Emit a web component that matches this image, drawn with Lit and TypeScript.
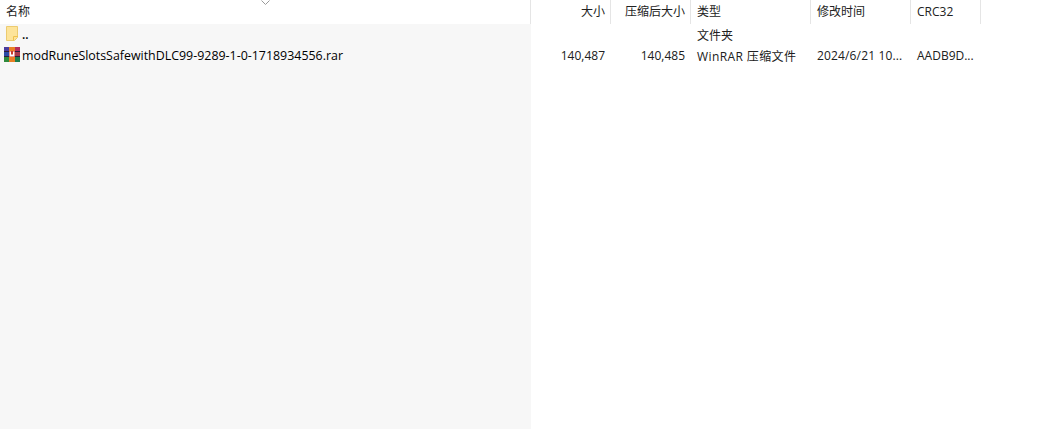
import { LitElement, html, css } from "lit";
import { customElement } from "lit/decorators.js";

const COLS = [
  { label: "名称", cls: "name" },
  { label: "大小", cls: "num" },
  { label: "压缩后大小", cls: "num" },
  { label: "类型", cls: "" },
  { label: "修改时间", cls: "" },
  { label: "CRC32", cls: "" },
];

@customElement("app-root")
export class AppRoot extends LitElement {
  static styles = css`
    :host {
      display: block;
      width: 1064px;
      height: 429px;
      overflow: hidden;
      background: #fff;
      font-family: "Open Sans", "Noto Sans CJK SC", sans-serif;
      font-size: 12px;
      color: #1a1a1a;
      position: relative;
    }
    .grid {
      display: grid;
      grid-template-columns: 531px 80px 80px 120px 100px 70px;
      grid-template-rows: 24px 21px 21px 1fr;
      height: 429px;
      width: 981px;
    }
    .head {
      display: flex;
      align-items: center;
      padding: 0 5px 1px 6px;
      border-right: 1px solid #e5e5e5;
      color: #222;
      line-height: 1;
      white-space: nowrap;
      box-sizing: border-box;
      font-size: 12px;
    }
    .head.num { justify-content: flex-end; }
    .cell {
      display: flex;
      align-items: center;
      padding: 0 5px 0 6px;
      white-space: nowrap;
      overflow: hidden;
      box-sizing: border-box;
      color: #202020;
    }
    .cell.num { justify-content: flex-end; padding-right: 6px; }
    .cell.name {
      background: #f7f7f7;
      padding: 0 0 0 4px;
      gap: 2px;
    }
    .head.name { background: #fff; padding-left: 6px; }
    .filename { font-size: 12.42px; color: #000; }
    .dots { color: #000; font-weight: 600; }
    .brand { letter-spacing: 0.4px; }
    .date { letter-spacing: 0.15px; }
    .folder { margin-top: -2px; }
    .archive { margin-top: -1px; }
    .fill { grid-column: 1; background: #f7f7f7; }
    .sort {
      position: absolute;
      left: 261px;
      top: 0;
      width: 9px;
      height: 5px;
    }
    svg { display: block; flex: none; }
  `;

  render() {
    return html`
      <div class="grid">
        ${COLS.map((c) => html`<div class="head ${c.cls}">${c.label}</div>`)}

        <div class="cell name">
          <svg class="folder" width="16" height="17" viewBox="0 0 16 17">
            <path d="M2.500 1.500h11v11l-3 3h-8z" fill="#fde49a" stroke="#eccb70" />
            <path d="M9.500 15.500v-4h4.500" fill="none" stroke="#efc24e" />
          </svg>
          <span class="dots">..</span>
        </div>
        <div class="cell"></div>
        <div class="cell"></div>
        <div class="cell">文件夹</div>
        <div class="cell"></div>
        <div class="cell"></div>

        <div class="cell name">
          <svg class="archive" width="16" height="16" viewBox="0 0 16 16">
            <rect x="0" y="0" width="16" height="15" fill="#2a1f3a" />
            <rect x="0" y="0" width="5" height="4" fill="#4a3c9e" />
            <rect x="11" y="0" width="5" height="4" fill="#b52c5c" />
            <rect x="0" y="5" width="5" height="4" fill="#2b4aa6" />
            <rect x="11" y="5" width="5" height="4" fill="#a83a4c" />
            <rect x="0" y="10" width="5" height="5" fill="#2f8a3c" />
            <rect x="11" y="10" width="5" height="5" fill="#1f7d4a" />
            <rect x="5" y="0" width="6" height="15" fill="#e97f26" />
            <rect x="5" y="4" width="6" height="6" fill="#c93a2c" />
            <path d="M5.500 4.500h1.500v3h2v-3h1.500v5h-5z" fill="#fff" />
          </svg>
          <span class="filename">modRuneSlotsSafewithDLC99-9289-1-0-1718934556.rar</span>
        </div>
        <div class="cell num">140,487</div>
        <div class="cell num">140,485</div>
        <div class="cell"><span class="brand">WinRAR 压缩文件</span></div>
        <div class="cell"><span class="date">2024/6/21 10...</span></div>
        <div class="cell">AADB9D...</div>

        <div class="fill"></div>
      </div>
      <svg class="sort" viewBox="0 0 9 5">
        <path d="M0.500 0.500l4 4 4-4" fill="none" stroke="#9a9a9a" />
      </svg>
    `;
  }
}
